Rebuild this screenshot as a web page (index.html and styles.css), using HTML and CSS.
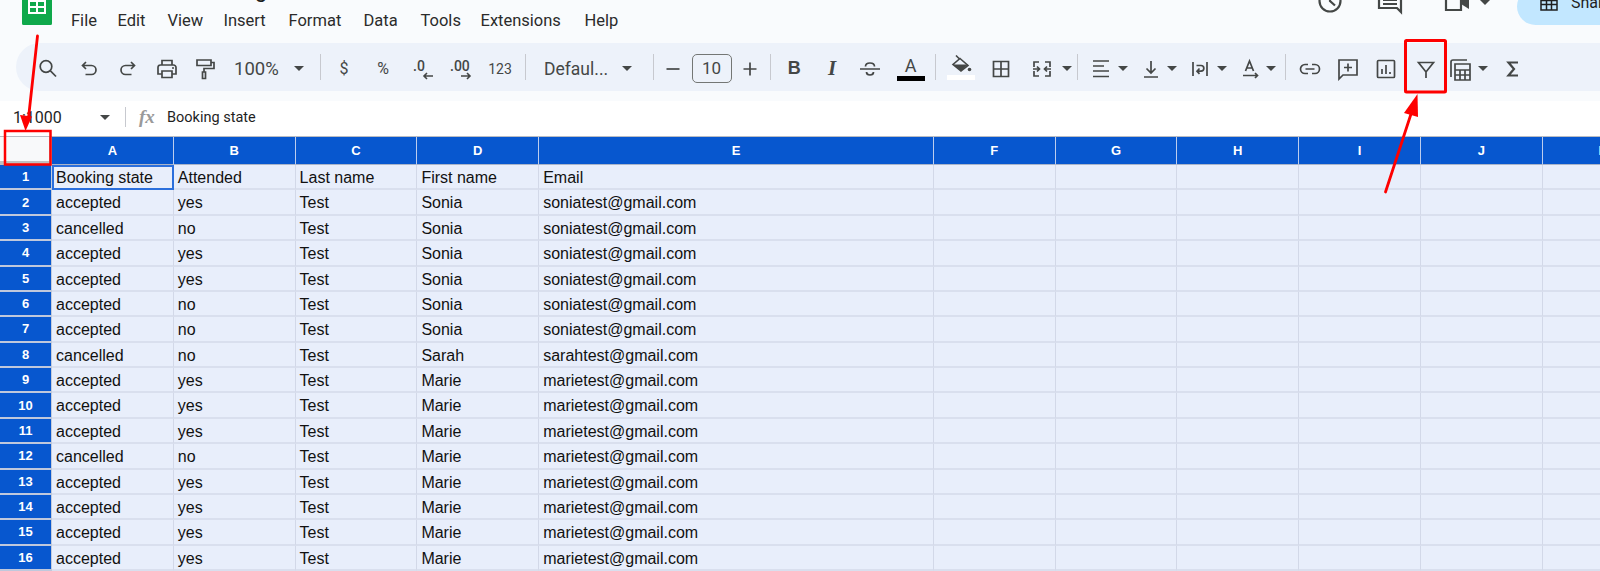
FILE: index.html
```html
<!DOCTYPE html>
<html lang="en">
<head>
<meta charset="utf-8">
<title>Booking list - Google Sheets</title>
<link rel="stylesheet" href="styles.css">
</head>
<body>
<div class="page">
  <header class="topbar">
    <svg class="logo" viewBox="0 0 30 25" width="30" height="25"><path class="logo-bg" d="M0 0h30v23.5a1.5 1.5 0 0 1-1.5 1.5h-27A1.5 1.5 0 0 1 0 23.5z"/><path class="logo-grid" d="M6 0v14h18V0zM8 2h6v4H8zm8 0h6v4h-6zM8 8h6v4H8zm8 0h6v4h-6z" fill-rule="evenodd"/></svg>
    <div class="titles">
      <div class="doc-title">Attendance tracking</div>
      <nav class="menu">
        <span class="m-file">File</span><span class="m-edit">Edit</span><span class="m-view">View</span><span class="m-insert">Insert</span><span class="m-format">Format</span><span class="m-data">Data</span><span class="m-tools">Tools</span><span class="m-ext">Extensions</span><span>Help</span>
      </nav>
    </div>
    <div class="actions">
      <svg class="a-clock" width="26" height="26" viewBox="0 0 26 26"><circle cx="13" cy="13" r="10.5"/><path d="M13 6v7l5 4.5"/></svg>
      <svg class="a-comment" width="26" height="28" viewBox="0 0 26 28"><path d="M2 2h22v22l-4-4H2z"/><path d="M6 8h14M6 12h14M6 16h14"/></svg>
      <svg class="a-video" width="26" height="26" viewBox="0 0 26 26"><path d="M2 3h15v20H2z"/><path class="solid" d="M17 9l8-5v18l-8-5z"/></svg>
      <svg class="a-caret caret-ic" width="10" height="5" viewBox="0 0 10 5"><path d="M0 0h10L5 5z"/></svg>
      <div class="share">
        <svg class="share-ic" width="18" height="16" viewBox="0 0 18 16"><path d="M1 1h16v14H1zM1 5.500h16M1 9.500h16M6.500 5.500V15M11.500 5.500V15"/></svg>
        <span>Share</span>
      </div>
    </div>
  </header>

  <div class="toolbar">
    <button class="tb"><svg class="ic" width="24" height="24" viewBox="0 0 24 24"><circle cx="10" cy="9.500" r="5.800"/><path d="M14.200 13.700 20 19.500"/></svg></button>
    <button class="tb undo"><svg class="ic" width="24" height="24" viewBox="0 0 24 24"><path d="M9 5 5.500 8.500 9 12M5.500 8.500h9a4.500 4.500 0 0 1 0 9H8.500"/></svg></button>
    <button class="tb"><svg class="ic" width="24" height="24" viewBox="0 0 24 24"><path d="M15 5l3.500 3.500L15 12M18.500 8.500h-9a4.500 4.500 0 0 0 0 9h6"/></svg></button>
    <button class="tb"><svg class="ic" width="24" height="24" viewBox="0 0 24 24"><path d="M7 8V3.500h10V8M7 17H3v-6.500A2.500 2.500 0 0 1 5.500 8h13a2.500 2.500 0 0 1 2.500 2.500V17h-4M7 14h10v6.500H7z"/><circle class="solid" cx="18" cy="11" r="1"/></svg></button>
    <button class="tb paint"><svg class="ic" width="24" height="24" viewBox="0 0 24 24"><path d="M4 3h14v5.500H4zM18 5.500h3v6h-10v3.500M9.500 15h3v6.500h-3z"/></svg></button>
    <button class="tb zoom"><span>100%</span><svg class="caret-ic" width="10" height="5" viewBox="0 0 10 5"><path d="M0 0h10L5 5z"/></svg></button>
    <i class="sep"></i>
    <button class="tb txt">$</button>
    <button class="tb txt">%</button>
    <button class="tb"><svg class="ic-t" width="28" height="24" viewBox="0 0 28 24"><text x="5" y="14" class="svg-t">.0</text><path d="M25 19h-9M19 16l-3 3 3 3"/></svg></button>
    <button class="tb"><svg class="ic-t" width="30" height="24" viewBox="0 0 30 24"><text x="4" y="14" class="svg-t">.00</text><path d="M15 19h9M21 16l3 3-3 3"/></svg></button>
    <button class="tb txt small">123</button>
    <i class="sep"></i>
    <button class="tb font"><span>Defaul...</span><svg class="caret-ic" width="10" height="5" viewBox="0 0 10 5"><path d="M0 0h10L5 5z"/></svg></button>
    <i class="sep"></i>
    <button class="tb step minus"><svg class="ic" width="16" height="16" viewBox="0 0 16 16"><path d="M1.500 8h13"/></svg></button>
    <div class="size">10</div>
    <button class="tb step plus"><svg class="ic" width="16" height="16" viewBox="0 0 16 16"><path d="M1.500 8h13M8 1.500v13"/></svg></button>
    <i class="sep"></i>
    <button class="tb fmt bold">B</button>
    <button class="tb fmt ital">I</button>
    <button class="tb"><svg class="ic" width="24" height="24" viewBox="0 0 24 24"><path d="M2 12h20M7.500 9.500C7.500 7 9.500 6 12 6s4.500 1 4.500 3.500M8.500 15c0 2 1.500 3 3.500 3s3.500-1 3.500-3"/></svg></button>
    <button class="tb colour text-colour">
      <span class="colour-a">A</span><i class="bar black"></i>
    </button>
    <i class="sep"></i>
    <button class="tb colour fill">
      <svg class="fill-ic" width="24" height="19" viewBox="0 0 24 19"><path class="fill-out" d="M7 0.500 11 4.500M11 3.500 19 10.500 12 16 4 9.500z"/><path d="M4 9.500h15L12 16z"/><circle cx="20.500" cy="14.500" r="1.800"/></svg><i class="bar white"></i>
    </button>
    <button class="tb borders"><svg class="ic" width="24" height="24" viewBox="0 0 24 24"><path d="M4.500 4.500h15v15h-15zM12 4.500v15M4.500 12h15"/></svg></button>
    <button class="tb merge"><svg class="ic" width="24" height="24" viewBox="0 0 24 24"><path d="M9 5H4v5M4 14v5h5M15 5h5v5M20 14v5h-5M3 12h6M7 9.500 9.500 12 7 14.500M21 12h-6M17 9.500 14.500 12l2.500 2.500"/></svg></button>
    <span class="drop"><svg class="caret-ic" width="10" height="5" viewBox="0 0 10 5"><path d="M0 0h10L5 5z"/></svg></span>
    <i class="sep"></i>
    <button class="tb narrow"><svg class="ic" width="24" height="24" viewBox="0 0 24 24"><path d="M4 4h16M4 9h11M4 14h16M4 19.500h16"/></svg></button>
    <span class="drop"><svg class="caret-ic" width="10" height="5" viewBox="0 0 10 5"><path d="M0 0h10L5 5z"/></svg></span>
    <button class="tb narrow"><svg class="ic" width="24" height="24" viewBox="0 0 24 24"><path d="M12 4v12M7.500 11.500 12 16l4.500-4.500M5 20h14"/></svg></button>
    <span class="drop"><svg class="caret-ic" width="10" height="5" viewBox="0 0 10 5"><path d="M0 0h10L5 5z"/></svg></span>
    <button class="tb narrow"><svg class="ic" width="24" height="24" viewBox="0 0 24 24"><path d="M5 5v14M19 5v14M8.500 8.500H13a2.800 2.800 0 0 1 0 5.700H9.500M11.500 11.500 9 14.200l2.500 2.600"/></svg></button>
    <span class="drop"><svg class="caret-ic" width="10" height="5" viewBox="0 0 10 5"><path d="M0 0h10L5 5z"/></svg></span>
    <button class="tb narrow"><svg class="ic" width="24" height="24" viewBox="0 0 24 24"><path d="M7.500 14 11.500 4l4 10M9 11h5M5 18.500h14M17 16l2.500 2.500L17 21"/></svg></button>
    <span class="drop last"><svg class="caret-ic" width="10" height="5" viewBox="0 0 10 5"><path d="M0 0h10L5 5z"/></svg></span>
    <i class="sep"></i>
    <button class="tb link"><svg class="ic" width="24" height="24" viewBox="0 0 24 24"><path d="M10 7.500H7a4.500 4.500 0 0 0 0 9h3M14 7.500h3a4.500 4.500 0 0 1 0 9h-3M7.500 12h9"/></svg></button>
    <button class="tb slim"><svg class="ic" width="24" height="24" viewBox="0 0 24 24"><path d="M3 3h18v15H7l-4 4zM12 6.500v8M8 10.500h8"/></svg></button>
    <button class="tb slim"><svg class="ic" width="24" height="24" viewBox="0 0 24 24"><path d="M4.500 3.500h15a1 1 0 0 1 1 1v15a1 1 0 0 1-1 1h-15a1 1 0 0 1-1-1v-15a1 1 0 0 1 1-1zM8 12v5M12 8v9M16 15v2"/></svg></button>
    <button class="tb filter"><svg class="ic" width="24" height="24" viewBox="0 0 24 24"><path d="M4.500 5.500h15L12 15zM12 15v6"/></svg></button>
    <button class="tb calc"><svg class="ic" width="24" height="24" viewBox="0 0 24 24"><path d="M3 20V5a2 2 0 0 1 2-2h14M7 7h15v16H7zM7 13h15M7 18h15M12 13v10M17 13v10"/></svg></button>
    <span class="drop wide"><svg class="caret-ic" width="10" height="5" viewBox="0 0 10 5"><path d="M0 0h10L5 5z"/></svg></span>
    <button class="tb sigma"><svg class="ic heavy" width="24" height="24" viewBox="0 0 24 24"><path d="M17 5.500H7.500l5.500 6.500-5.500 6.500H17"/></svg></button>
  </div>

  <div class="formula">
    <div class="namebox"><span>1:1000</span><svg class="caret-ic" width="10" height="5" viewBox="0 0 10 5"><path d="M0 0h10L5 5z"/></svg></div>
    <i class="fsep"></i>
    <span class="fx">fx</span>
    <span class="fvalue">Booking state</span>
  </div>

  <div class="sheet">
    <div class="corner"></div><div class="ch">A</div><div class="ch">B</div><div class="ch">C</div><div class="ch">D</div><div class="ch">E</div><div class="ch">F</div><div class="ch">G</div><div class="ch">H</div><div class="ch">I</div><div class="ch">J</div><div class="ch">K</div>

    <div class="rh">1</div><div class="c active">Booking state</div><div class="c">Attended</div><div class="c">Last name</div><div class="c">First name</div><div class="c">Email</div><div class="c"></div><div class="c"></div><div class="c"></div><div class="c"></div><div class="c"></div><div class="c"></div>
    <div class="rh">2</div><div class="c">accepted</div><div class="c">yes</div><div class="c">Test</div><div class="c">Sonia</div><div class="c">soniatest@gmail.com</div><div class="c"></div><div class="c"></div><div class="c"></div><div class="c"></div><div class="c"></div><div class="c"></div>
    <div class="rh">3</div><div class="c">cancelled</div><div class="c">no</div><div class="c">Test</div><div class="c">Sonia</div><div class="c">soniatest@gmail.com</div><div class="c"></div><div class="c"></div><div class="c"></div><div class="c"></div><div class="c"></div><div class="c"></div>
    <div class="rh">4</div><div class="c">accepted</div><div class="c">yes</div><div class="c">Test</div><div class="c">Sonia</div><div class="c">soniatest@gmail.com</div><div class="c"></div><div class="c"></div><div class="c"></div><div class="c"></div><div class="c"></div><div class="c"></div>
    <div class="rh">5</div><div class="c">accepted</div><div class="c">yes</div><div class="c">Test</div><div class="c">Sonia</div><div class="c">soniatest@gmail.com</div><div class="c"></div><div class="c"></div><div class="c"></div><div class="c"></div><div class="c"></div><div class="c"></div>
    <div class="rh">6</div><div class="c">accepted</div><div class="c">no</div><div class="c">Test</div><div class="c">Sonia</div><div class="c">soniatest@gmail.com</div><div class="c"></div><div class="c"></div><div class="c"></div><div class="c"></div><div class="c"></div><div class="c"></div>
    <div class="rh">7</div><div class="c">accepted</div><div class="c">no</div><div class="c">Test</div><div class="c">Sonia</div><div class="c">soniatest@gmail.com</div><div class="c"></div><div class="c"></div><div class="c"></div><div class="c"></div><div class="c"></div><div class="c"></div>
    <div class="rh">8</div><div class="c">cancelled</div><div class="c">no</div><div class="c">Test</div><div class="c">Sarah</div><div class="c">sarahtest@gmail.com</div><div class="c"></div><div class="c"></div><div class="c"></div><div class="c"></div><div class="c"></div><div class="c"></div>
    <div class="rh">9</div><div class="c">accepted</div><div class="c">yes</div><div class="c">Test</div><div class="c">Marie</div><div class="c">marietest@gmail.com</div><div class="c"></div><div class="c"></div><div class="c"></div><div class="c"></div><div class="c"></div><div class="c"></div>
    <div class="rh">10</div><div class="c">accepted</div><div class="c">yes</div><div class="c">Test</div><div class="c">Marie</div><div class="c">marietest@gmail.com</div><div class="c"></div><div class="c"></div><div class="c"></div><div class="c"></div><div class="c"></div><div class="c"></div>
    <div class="rh">11</div><div class="c">accepted</div><div class="c">yes</div><div class="c">Test</div><div class="c">Marie</div><div class="c">marietest@gmail.com</div><div class="c"></div><div class="c"></div><div class="c"></div><div class="c"></div><div class="c"></div><div class="c"></div>
    <div class="rh">12</div><div class="c">cancelled</div><div class="c">no</div><div class="c">Test</div><div class="c">Marie</div><div class="c">marietest@gmail.com</div><div class="c"></div><div class="c"></div><div class="c"></div><div class="c"></div><div class="c"></div><div class="c"></div>
    <div class="rh">13</div><div class="c">accepted</div><div class="c">yes</div><div class="c">Test</div><div class="c">Marie</div><div class="c">marietest@gmail.com</div><div class="c"></div><div class="c"></div><div class="c"></div><div class="c"></div><div class="c"></div><div class="c"></div>
    <div class="rh">14</div><div class="c">accepted</div><div class="c">yes</div><div class="c">Test</div><div class="c">Marie</div><div class="c">marietest@gmail.com</div><div class="c"></div><div class="c"></div><div class="c"></div><div class="c"></div><div class="c"></div><div class="c"></div>
    <div class="rh">15</div><div class="c">accepted</div><div class="c">yes</div><div class="c">Test</div><div class="c">Marie</div><div class="c">marietest@gmail.com</div><div class="c"></div><div class="c"></div><div class="c"></div><div class="c"></div><div class="c"></div><div class="c"></div>
    <div class="rh">16</div><div class="c">accepted</div><div class="c">yes</div><div class="c">Test</div><div class="c">Marie</div><div class="c">marietest@gmail.com</div><div class="c"></div><div class="c"></div><div class="c"></div><div class="c"></div><div class="c"></div><div class="c"></div>
  </div>

  <svg class="markup" width="1600" height="571" viewBox="0 0 1600 571">
    <rect class="mark-box" x="5" y="131" width="45.500" height="33.500"/>
    <rect class="mark-box thick" x="1405.500" y="40.500" width="40" height="51.500" rx="1"/>
    <path class="mark-line" d="M37.500 36 28.500 118"/>
    <path class="mark-head" d="M20 115 32 116.500 25.500 131z"/>
    <path class="mark-line" d="M1385.500 192 1411 114"/>
    <path class="mark-head" d="M1404 113 1418 117 1417.500 94z"/>
  </svg>
</div>
</body>
</html>
```
FILE: styles.css
```css
* { box-sizing: border-box; }
html, body { margin: 0; padding: 0; }
body { background: #f9fbfd; font-family: Roboto, "Liberation Sans", sans-serif; color: #1f1f1f; }
.page { position: relative; width: 1600px; height: 571px; overflow: hidden; background: #f9fbfd; }

/* top bar */
.topbar { display: flex; height: 43px; overflow: hidden; }
.logo { flex: none; margin-left: 22px; }
.logo-bg { fill: #0fa84b; }
.logo-grid { fill: #fff; }
.titles { display: flex; flex-direction: column; justify-content: flex-end; margin-left: 19px; height: 34px; flex: none; }
.doc-title { font-size: 22px; line-height: 26px; margin-bottom: 6px; white-space: nowrap; flex: none; }
.menu { display: flex; font-size: 16.500px; line-height: 24px; color: #2b2b2b; padding-bottom: 1px; flex: none; }
.m-file { width: 46.500px; }
.m-edit { width: 50px; }
.m-view { width: 56px; }
.m-insert { width: 65px; }
.m-format { width: 75px; }
.m-data { width: 57px; }
.m-tools { width: 60px; }
.m-ext { width: 104px; }

.actions { display: flex; margin-left: auto; margin-top: -12px; align-items: flex-start; }
.actions svg { fill: none; stroke: #444746; stroke-width: 2.200; flex: none; }
.actions .solid { fill: #444746; stroke: none; }
.a-clock { margin-right: 34px; }
.a-comment { margin-right: 41px; }
.a-video { margin-right: 10px; margin-top: -1px; }
.actions .a-caret { fill: #444746; stroke: none; margin-top: 12px; margin-right: 27px; }
.share { width: 83px; height: 37px; background: #c2e7ff; border-radius: 25px 0 0 25px; display: flex; align-items: center; padding: 0 0 8px 23px; gap: 13px; font-size: 16px; white-space: nowrap; overflow: hidden; flex: none; }
.actions .share-ic { stroke-width: 1.500; stroke: #1f1f1f; }

/* toolbar */
.toolbar { display: flex; align-items: center; height: 48px; margin-left: 16px; padding: 3px 0 0 12.500px; background: #edf2fa; border-radius: 24px 0 0 24px; }
.tb { flex: none; width: 39px; height: 32px; border: 0; padding: 0; background: none; display: flex; align-items: center; justify-content: center; font-family: Roboto, "Liberation Sans", sans-serif; color: #444746; }
.ic { fill: none; stroke: #444746; stroke-width: 1.700; }
.ic .solid { fill: #444746; stroke: none; }
.ic.heavy { stroke-width: 2.200; }
.ic-t { fill: none; stroke: #444746; stroke-width: 1.600; }
.svg-t { fill: #444746; stroke: none; font: 500 14px Roboto, sans-serif; }
.caret-ic { fill: #444746; flex: none; }
.undo { margin-left: 2px; }
.paint { margin-left: -1.500px; }
.txt { font-size: 16px; }
.small { font-size: 14px; }
.zoom { width: 91px; justify-content: flex-start; padding-left: 10px; font-size: 18.500px; gap: 15px; }
.font { width: 118.500px; justify-content: flex-start; padding-left: 15px; font-size: 17.500px; gap: 14px; }
.sep { flex: none; width: 1px; height: 26px; margin: -3px 3.500px 0 5px; background: #c7c9cf; }
.step { width: 32px; }
.plus { width: 30.500px; }
.size { flex: none; width: 40px; height: 29px; margin: 0 3px 0 2.500px; border: 1px solid #747775; border-radius: 5px; font-size: 17px; line-height: 27px; text-align: center; color: #444746; }
.fmt { font-size: 18px; font-family: "Liberation Sans", sans-serif; }
.bold { font-weight: 700; width: 39.500px; }
.ital { font-style: italic; font-family: "Liberation Serif", serif; font-size: 21px; font-weight: 700; width: 36px; }
.colour { flex-direction: column; height: 25px; justify-content: flex-start; }
.text-colour { margin-left: 2px; }
.colour-a { font-size: 18px; line-height: 19px; height: 20px; }
.bar { display: block; width: 28px; height: 5px; flex: none; }
.black { background: #000; }
.white { background: #fff; }
.fill { margin-left: 1.500px; }
.fill-ic { fill: #444746; flex: none; margin-bottom: 1px; margin-top: -1px; }
.fill-out { fill: none; stroke: #444746; stroke-width: 1.600; }
.borders { margin-left: 1px; }
.merge { width: 40px; margin-left: 2px; }
.narrow { width: 33px; }
.sep + .narrow { margin-left: 3px; }
.drop { flex: none; width: 16.500px; display: flex; align-items: center; }
.drop.wide { width: 20px; padding-left: 3px; }
.merge + .drop { width: 10px; }
.drop.last { width: 13.500px; }
.calc { width: 30px; }
.link { width: 38.500px; margin-left: 2px; }
.slim { width: 37.500px; }
.filter { margin-left: 1.500px; }
.sigma { width: 30px; margin-left: 3px; }

/* formula bar */
.formula { display: flex; align-items: center; height: 35px; margin-top: 10px; background: #fff; padding-bottom: 3px; }
.namebox { width: 125px; display: flex; align-items: center; padding-left: 13px; font-size: 16px; flex: none; }
.namebox span { width: 87px; }
.fsep { width: 1px; height: 20px; background: #c7c9cf; flex: none; }
.fx { width: 41px; padding-left: 13px; font-family: "Liberation Serif", serif; font-style: italic; font-weight: 700; font-size: 19px; color: #9a9a9a; flex: none; }
.fvalue { font-size: 14.500px; }

/* grid */
.sheet { display: grid; grid-template-columns: 52px repeat(4, 121.800px) 394.600px repeat(6, 121.800px); grid-template-rows: 28px repeat(16, 25.380px); border-top: 1px solid #b9bcc3; font-family: "Liberation Sans", sans-serif; }
.corner { background: #f8f9fa; border-right: 3px solid #c0c0c0; border-bottom: 4px solid #c0c0c0; }
.ch { background: #0757cf; color: #fff; font-weight: 700; font-size: 13px; display: flex; align-items: center; justify-content: center; border-right: 1px solid #bccdee; border-bottom: 1px solid #a9b4c9; }
.rh { background: #0757cf; color: #fff; font-weight: 700; font-size: 13px; display: flex; align-items: center; justify-content: center; border-bottom: 2px solid #bfc8dc; border-right: 1px solid #c4cbdb; }
.c { background: #e8eefb; font-size: 16px; color: #111; line-height: 24px; padding: 1px 0 0 4px; border-right: 1px solid #d2d8e8; border-bottom: 2px solid #d9dfee; white-space: nowrap; overflow: hidden; }
.active { border: 0; outline: 2px solid #2b6fdc; outline-offset: -2px; line-height: 25px; padding-top: 0; }

/* annotation overlay */
.markup { position: absolute; left: 0; top: 0; pointer-events: none; }
.mark-box { fill: none; stroke: #fe0000; stroke-width: 2.500; }
.thick { stroke-width: 3px; }
.mark-line { fill: none; stroke: #fe0000; stroke-width: 2.800; stroke-linecap: round; }
.mark-head { fill: #fe0000; }
```
